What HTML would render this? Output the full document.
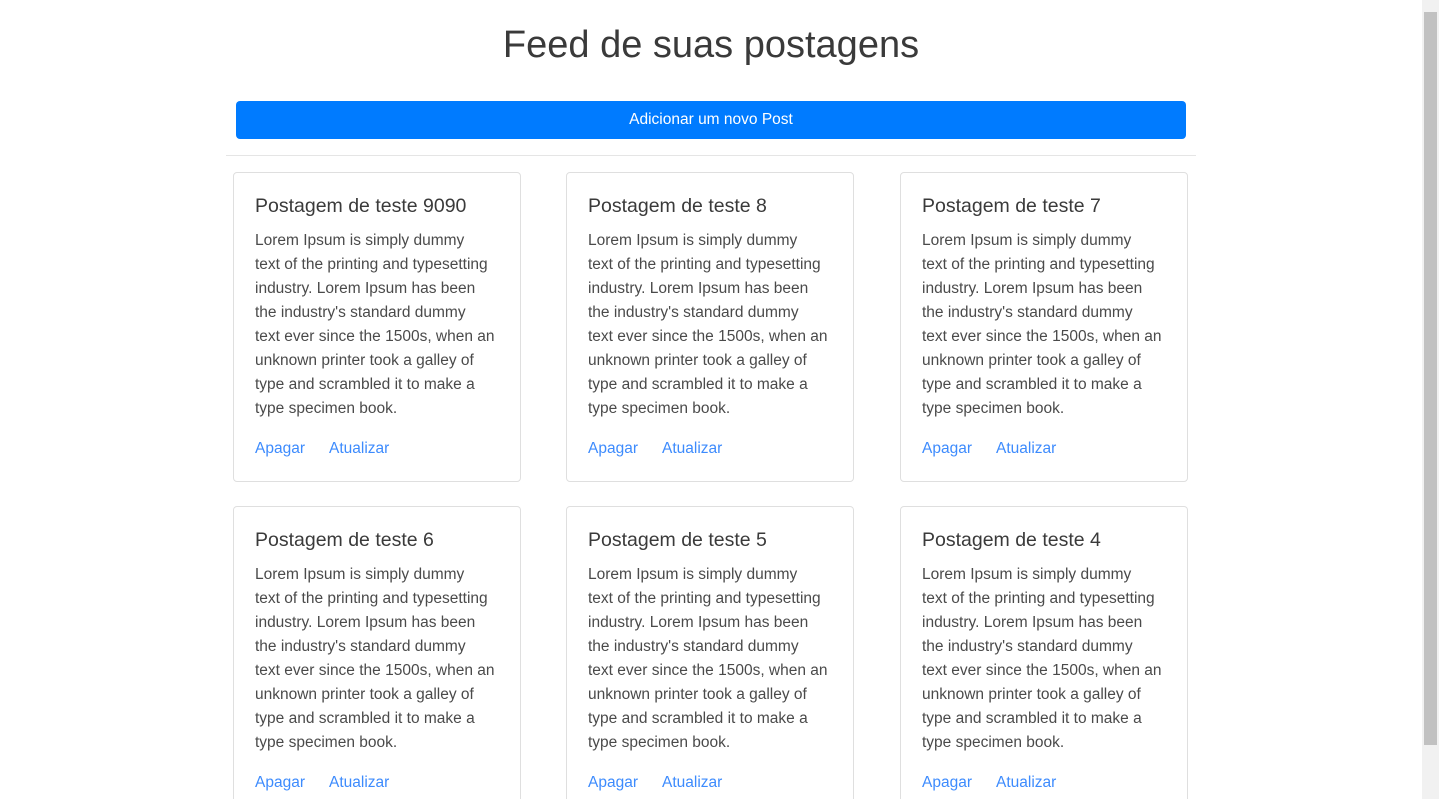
<!DOCTYPE html>
<html><head><meta charset="utf-8"><style>
html,body{margin:0;height:799px;overflow:hidden}
body{background:#fff;font-family:"Liberation Sans",sans-serif;color:#212529;width:1439px;position:relative}
h1{position:absolute;top:20px;left:0;width:1422px;text-align:center;margin:0;font-weight:normal;font-size:38px;line-height:50px;color:#3a3a3a}
.btn{position:absolute;left:236px;top:101px;width:950px;height:38px;background:#007bff;border-radius:4px;color:#fff;text-align:center;line-height:38px;font-size:15.5px}
.hr{position:absolute;left:226px;top:155px;width:970px;border-top:1px solid #e5e5e5}
.card{position:absolute;width:286px;height:308px;border:1px solid #dfdfdf;border-radius:4px}
.card h5{position:absolute;left:21px;top:20px;margin:0;font-weight:normal;font-size:19.5px;line-height:26px;color:#3a3a3a;white-space:nowrap}
.card p{position:absolute;left:21px;top:56px;margin:0;font-size:15.5px;line-height:24px;color:#4a4a4a;white-space:nowrap}
.card .l{position:absolute;top:264px;font-size:15.5px;color:#3d8bfd;line-height:24px}
.sb{position:absolute;right:0;top:0;width:17px;height:799px;background:#f1f1f1}
.sb div{position:absolute;left:2px;top:12px;width:13px;height:733px;background:#c1c1c1}
</style></head><body>
<h1>Feed de suas postagens</h1>
<div class="btn">Adicionar um novo Post</div>
<div class="hr"></div>

<div class="card" style="left:233px;top:172px"><h5>Postagem de teste 9090</h5><p>Lorem Ipsum is simply dummy<br>text of the printing and typesetting<br>industry. Lorem Ipsum has been<br>the industry's standard dummy<br>text ever since the 1500s, when an<br>unknown printer took a galley of<br>type and scrambled it to make a<br>type specimen book.</p><span class="l" style="left:21px">Apagar</span><span class="l" style="left:95px">Atualizar</span></div>
<div class="card" style="left:566px;top:172px"><h5>Postagem de teste 8</h5><p>Lorem Ipsum is simply dummy<br>text of the printing and typesetting<br>industry. Lorem Ipsum has been<br>the industry's standard dummy<br>text ever since the 1500s, when an<br>unknown printer took a galley of<br>type and scrambled it to make a<br>type specimen book.</p><span class="l" style="left:21px">Apagar</span><span class="l" style="left:95px">Atualizar</span></div>
<div class="card" style="left:900px;top:172px"><h5>Postagem de teste 7</h5><p>Lorem Ipsum is simply dummy<br>text of the printing and typesetting<br>industry. Lorem Ipsum has been<br>the industry's standard dummy<br>text ever since the 1500s, when an<br>unknown printer took a galley of<br>type and scrambled it to make a<br>type specimen book.</p><span class="l" style="left:21px">Apagar</span><span class="l" style="left:95px">Atualizar</span></div>
<div class="card" style="left:233px;top:506px"><h5>Postagem de teste 6</h5><p>Lorem Ipsum is simply dummy<br>text of the printing and typesetting<br>industry. Lorem Ipsum has been<br>the industry's standard dummy<br>text ever since the 1500s, when an<br>unknown printer took a galley of<br>type and scrambled it to make a<br>type specimen book.</p><span class="l" style="left:21px">Apagar</span><span class="l" style="left:95px">Atualizar</span></div>
<div class="card" style="left:566px;top:506px"><h5>Postagem de teste 5</h5><p>Lorem Ipsum is simply dummy<br>text of the printing and typesetting<br>industry. Lorem Ipsum has been<br>the industry's standard dummy<br>text ever since the 1500s, when an<br>unknown printer took a galley of<br>type and scrambled it to make a<br>type specimen book.</p><span class="l" style="left:21px">Apagar</span><span class="l" style="left:95px">Atualizar</span></div>
<div class="card" style="left:900px;top:506px"><h5>Postagem de teste 4</h5><p>Lorem Ipsum is simply dummy<br>text of the printing and typesetting<br>industry. Lorem Ipsum has been<br>the industry's standard dummy<br>text ever since the 1500s, when an<br>unknown printer took a galley of<br>type and scrambled it to make a<br>type specimen book.</p><span class="l" style="left:21px">Apagar</span><span class="l" style="left:95px">Atualizar</span></div>
<div class="sb"><div></div></div>
</body></html>
